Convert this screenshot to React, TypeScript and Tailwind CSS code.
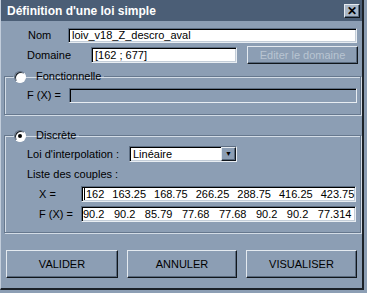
import React from 'react';

const sunken =
  'border border-t-[#5d6e83] border-l-[#5d6e83] border-b-[#e8edf2] border-r-[#e8edf2] shadow-[inset_1px_1px_0_#000,inset_-1px_-1px_0_#c3cdd8]';
const raised =
  'border border-t-[#e4eaf0] border-l-[#e4eaf0] border-b-[#10161c] border-r-[#10161c] shadow-[inset_-1px_-1px_0_#58697d]';
const etched =
  'border border-[#66788e] shadow-[inset_1px_1px_0_#d3dce6,1px_1px_0_#d3dce6]';

const xValues = ['162', '163.25', '168.75', '266.25', '288.75', '416.25', '423.75'];
const fxValues = ['90.2', '90.2', '85.79', '77.68', '77.68', '90.2', '90.2', '77.314'];

function Radio({ checked }: { checked?: boolean }) {
  return (
    <span className="flex h-[12px] w-[12px] items-center justify-center rounded-full border border-t-[#5d6e83] border-l-[#5d6e83] border-b-white border-r-white bg-white shadow-[inset_1px_1px_0_#1a2027]">
      {checked && <span className="h-[4px] w-[4px] rounded-full bg-black" />}
    </span>
  );
}

function Button({ children }: { children: React.ReactNode }) {
  return (
    <div className={`flex h-[28px] items-center justify-center ${raised}`}>
      {children}
    </div>
  );
}

export default function App() {
  return (
    <div className="h-[293px] w-[367px] overflow-hidden bg-[#8c9eb4] font-['Liberation_Sans',Arial,sans-serif] text-[11px] text-black">
      <div className="h-[290px] w-[364px] border-l border-l-[#c2cddb] border-r-2 border-r-[#1b2128] border-b-2 border-b-[#1b2128]">
        {/* title bar */}
        <div className="flex h-[21px] items-center justify-between bg-[#4b5e76] pl-[6px] pr-[2px]">
          <span className="text-[12px] font-bold text-white">Définition d'une loi simple</span>
          <span className={`flex h-[14px] w-[16px] items-center justify-center bg-[#a9b6c6] text-[12px] font-bold leading-none ${raised}`}>
            ✕
          </span>
        </div>

        {/* Nom */}
        <div className="mt-[7px] flex h-[15px] items-center">
          <span className="ml-[27px] w-[40px]">Nom</span>
          <div className={`flex h-[15px] w-[289px] items-center bg-white pl-[3px] ${sunken}`}>
            loiv_v18_Z_descro_aval
          </div>
        </div>

        {/* Domaine */}
        <div className="mt-[3px] flex h-[18px] items-center">
          <span className="ml-[26px] w-[64px]">Domaine</span>
          <div className={`flex h-[16px] w-[146px] items-center bg-white pl-[3px] ${sunken}`}>
            [162 ; 677]
          </div>
          <div className={`ml-[10px] flex h-[18px] w-[111px] items-center justify-center text-[#b9c5d2] ${raised}`}>
            Editer le domaine
          </div>
        </div>

        {/* Fonctionnelle */}
        <fieldset className={`ml-[3px] mt-[6px] w-[357px] ${etched} pb-[11px]`}>
          <legend className="ml-[8px] flex h-[13px] items-center gap-[10px] pl-[1px] pr-[3px]">
            <Radio />
            <span>Fonctionnelle</span>
          </legend>
          <div className="mt-[5px] flex h-[15px] items-center">
            <span className="ml-[22px] w-[42px]">F (X) =</span>
            <div className={`h-[15px] w-[288px] ${sunken} shadow-[inset_1px_1px_0_#000]`} />
          </div>
        </fieldset>

        {/* Discrète */}
        <fieldset className={`ml-[3px] mt-[14px] w-[357px] ${etched} pb-[10px]`}>
          <legend className="ml-[8px] flex h-[13px] items-center gap-[10px] pl-[1px] pr-[3px]">
            <Radio checked />
            <span>Discrète</span>
          </legend>
          <div className="mt-[4px] flex h-[16px] items-center">
            <span className="ml-[22px] w-[102px]">Loi d'interpolation :</span>
            <div className={`flex h-[16px] w-[108px] items-center justify-between bg-white ${sunken}`}>
              <span className="pl-[3px]">Linéaire</span>
              <span className={`flex h-[14px] w-[15px] items-center justify-center bg-[#8c9eb4] text-[7px] ${raised}`}>
                ▼
              </span>
            </div>
          </div>
          <div className="mt-[6px] flex h-[13px] items-center">
            <span className="ml-[22px]">Liste des couples :</span>
          </div>
          <div className="mt-[5px] flex h-[16px] items-center">
            <span className="ml-[34px] w-[42px]">X =</span>
            <div className={`flex h-[16px] w-[275px] items-center gap-[8px] bg-white pl-[2px] ${sunken}`}>
              <span className="-mr-[7px] h-[12px] w-[1px] bg-black" />
              {xValues.map((v, i) => (
                <span key={i}>{v}</span>
              ))}
            </div>
          </div>
          <div className="mt-[4px] flex h-[16px] items-center">
            <span className="ml-[34px] w-[42px]">F (X) =</span>
            <div className={`flex h-[16px] w-[275px] items-center gap-[9.5px] bg-white pl-[1px] ${sunken}`}>
              {fxValues.map((v, i) => (
                <span key={i}>{v}</span>
              ))}
            </div>
          </div>
        </fieldset>

        {/* buttons */}
        <div className="mt-[17px] flex gap-[9px] pl-[5px]">
          <div className="w-[112px]">
            <Button>VALIDER</Button>
          </div>
          <div className="w-[110px]">
            <Button>ANNULER</Button>
          </div>
          <div className="w-[111px]">
            <Button>VISUALISER</Button>
          </div>
        </div>
      </div>
    </div>
  );
}
